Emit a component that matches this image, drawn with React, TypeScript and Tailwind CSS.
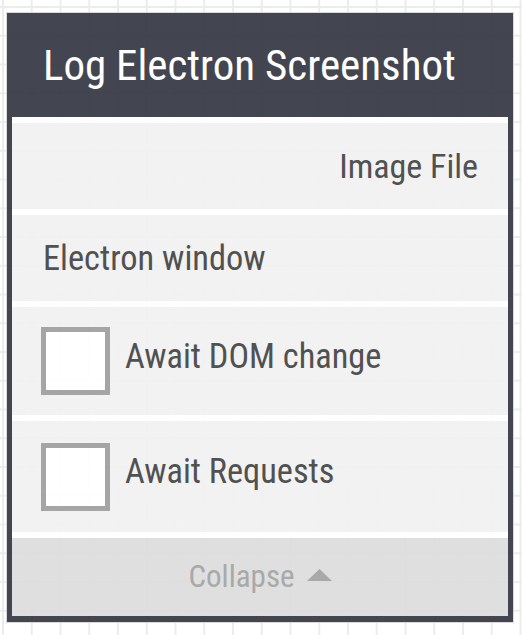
import React from "react";

function Checkbox() {
  return (
    <div className="w-[69px] h-[68px] border-[5px] border-[#a2a2a2] bg-white shrink-0" />
  );
}

export default function App() {
  return (
    <div
      className="w-[522px] h-[635px] overflow-hidden bg-white pt-[13px] pl-[7px] font-stretch-condensed [background-image:linear-gradient(to_right,#ececec_2px,transparent_2px),linear-gradient(to_bottom,#ececec_2px,transparent_2px)] [background-size:28.76px_28.76px] [background-position:2px_6px]"
      style={{ fontFamily: "Roboto, 'Noto Sans', sans-serif" }}
    >
      <div className="w-[506px] h-[609px] opacity-[0.96] bg-[#3c3e49] px-[5px] pb-[6px] flex flex-col shadow-[0_0_0_1px_#d8d8d8]">
        <div className="h-[104px] shrink-0 flex items-center pl-[31px] text-white text-[43px] leading-none whitespace-nowrap">
          Log Electron Screenshot
        </div>
        <div className="flex-1 bg-white flex flex-col gap-[6px] pt-[6px]">
          <div className="h-[86px] bg-[#f2f2f2] flex items-center justify-end pr-[30px] text-[34px] text-[#4a4a4a]">
            Image File
          </div>
          <div className="h-[86px] bg-[#f2f2f2] flex items-center pl-[31px] text-[34.4px] text-[#4a4a4a]">
            <span className="mt-[1px]">Electron window</span>
          </div>
          <div className="h-[108px] bg-[#f2f2f2] flex items-center pl-[29px] gap-[15px] text-[34.3px] text-[#4a4a4a]">
            <Checkbox />
            <span className="mb-[9px]">Await DOM change</span>
          </div>
          <div className="h-[111px] bg-[#f2f2f2] flex items-center pl-[29px] gap-[15px] text-[34.3px] text-[#4a4a4a]">
            <Checkbox />
            <span className="mb-[9px]">Await Requests</span>
          </div>
          <div className="flex-1 bg-[#dedede] flex items-center justify-center gap-[12px] text-[31px] text-[#a6a6a6]">
            <span>Collapse</span>
            <svg width="25" height="12" viewBox="0 0 25 12" className="mt-[-4px]">
              <polygon points="12.5,0 25,12 0,12" fill="#a6a6a6" />
            </svg>
          </div>
        </div>
      </div>
    </div>
  );
}
